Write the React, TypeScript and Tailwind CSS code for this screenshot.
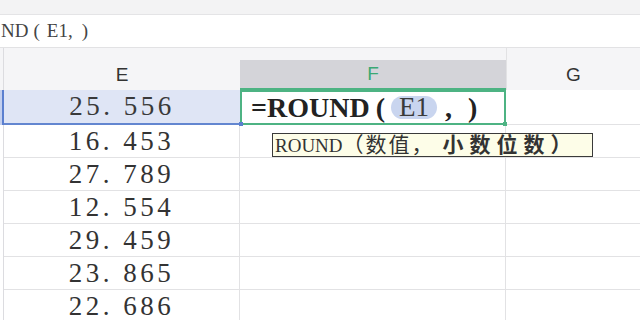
import React from 'react';

const serif = { fontFamily: '"Liberation Serif", "Noto Sans CJK SC", serif' };
const sans = { fontFamily: '"Liberation Sans", sans-serif' };

const values = ['16. 453', '27. 789', '12. 554', '29. 459', '23. 865', '22. 686'];

const App: React.FC = () => {
  return (
    <div className="relative w-[640px] h-[320px] overflow-hidden bg-white text-[#2e2e2e]">
      {/* toolbar strip */}
      <div className="h-[15px] bg-[#f3f3f4] border-b border-[#e4e4e6]" />

      {/* formula bar */}
      <div className="h-[33px] bg-white border-b border-[#e2e2e4] flex items-center text-[19px] text-[#444]" style={serif}>
        <span className="ml-[1px]">ND</span>
        <span className="ml-[5px]">(</span>
        <span className="ml-[7px]">E1</span>
        <span>,</span>
        <span className="ml-[9px]">)</span>
      </div>

      {/* column headers */}
      <div className="h-[42px] bg-[#f5f5f7] flex">
        <div className="w-[4px] border-r border-[#dcdce0]" />
        <div className="w-[236px] flex items-end">
          <div className="h-[30px] w-full flex items-center justify-center text-[19px] text-[#333]" style={sans}>
            E
          </div>
        </div>
        <div className="w-[266px] flex items-end">
          <div className="h-[30px] w-full bg-[#d4d4d9] border-b-2 border-[#4db383] flex items-center justify-center text-[19px] text-[#3aa874]" style={sans}>
            F
          </div>
        </div>
        <div className="flex-1 flex items-end border-l border-[#e2e2e4]">
          <div className="h-[30px] w-full flex items-center justify-center text-[19px] text-[#333]" style={sans}>
            G
          </div>
        </div>
      </div>

      {/* row 1 */}
      <div className="h-[35px] flex">
        <div className="w-[4px] bg-[#c3cfee] border-r-2 border-[#5b7fcf]" />
        <div className="relative w-[236px] bg-[#dfe5f5] border-b-2 border-[#6386d0] flex items-center justify-center text-[27px] tracking-[3.5px] text-[#3a3a3a]" style={serif}>
          25. 556
        </div>
        <div className="relative w-[266px] border-2 border-[#4db383] bg-white flex items-center pl-[9px] text-[28px] text-[#222]" style={serif}>
          <span className="font-bold">=ROUND</span>
          <span className="font-bold ml-[6px]">(</span>
          <span className="ml-[6px] h-[23px] px-[8px] rounded-full bg-[#c9d5ef] flex items-center text-[27px] text-[#3a3a3a]">E1</span>
          <span className="font-bold ml-[8px]">,</span>
          <span className="font-bold ml-[16px]">)</span>
          <div className="absolute -bottom-[3px] -right-[3px] w-[4px] h-[4px] bg-[#4db383]" />
          <div className="absolute -bottom-[3px] -left-[3px] w-[4px] h-[4px] bg-[#5b7fcf]" />
        </div>
        <div className="flex-1 border-b border-[#e2e2e4]" />
      </div>

      {/* remaining rows */}
      {values.map((v, i) => (
        <div key={i} className="h-[33px] flex">
          <div className="w-[4px] border-r border-[#dcdce0]" />
          <div className="w-[236px] border-b border-r border-[#e2e2e4] flex items-center justify-center text-[27px] tracking-[3.5px] text-[#333]" style={serif}>
            {v}
          </div>
          <div className="w-[266px] border-b border-r border-[#e2e2e4]" />
          <div className="flex-1 border-b border-[#e2e2e4]" />
        </div>
      ))}

      {/* function hint tooltip */}
      <div className="absolute left-[272px] top-[133px] w-[321px] h-[24px] border border-[#3a3a3a] bg-[#fdfde8] flex items-center pl-[2px] text-[#333] leading-none" style={serif}>
        <span className="text-[19px]">ROUND</span>
        <span className="text-[21px] tracking-[2px]">（数值，</span>
        <span className="text-[21px] font-bold tracking-[6px] ml-[8px]">小数位数）</span>
      </div>
    </div>
  );
};

export default App;
